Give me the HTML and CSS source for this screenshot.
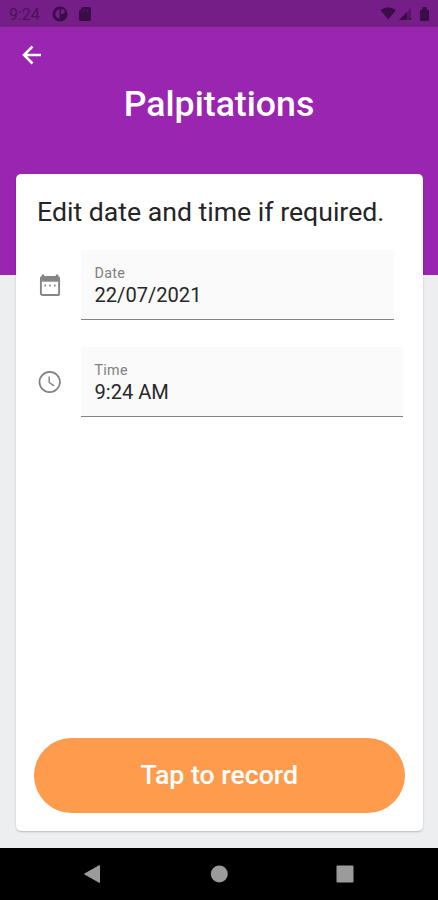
FILE: index.html
```html
<!DOCTYPE html>
<html lang="en">
<head>
<meta charset="utf-8">
<title>Palpitations</title>
<link rel="stylesheet" href="styles.css">
</head>
<body>
<div class="app">
  <div class="status">
    <span class="clock">9:24</span>
    <svg class="st-app" width="16" height="16" viewBox="0 0 16 16"><circle cx="8" cy="8" r="7.500" fill="#3a0d49"/><path d="M7.600 3v9.500C5.300 12.500 3.300 10.500 3.300 8S5 3.400 7.600 3zM9 3.200h1.400a2.400 2.400 0 0 1 0 4.800H9z" fill="#761e87"/></svg>
    <svg class="st-sd" width="12" height="14" viewBox="0 0 12 14"><path d="M4 0h6.500Q12 0 12 1.500v11q0 1.500-1.500 1.500h-9Q0 14 0 12.500V4z" fill="#3a0d49"/><path d="M4 2.500v2M6.200 2.500v2M8.400 2.500v2" stroke="#761e87" stroke-width=".6"/></svg>
    <svg class="st-right" width="50" height="16" viewBox="0 0 50 16"><path d="M.5 4Q8 -1.500 16 4L8.300 13.500z" fill="#3a0d49"/><path d="M19 14L31 2v12z" fill="#3a0d49" opacity=".5"/><path d="M19 14l8-8v8zM29 12h2v2h-2z" fill="#3a0d49"/><path d="M40 4.500L42.500 3V1h4v2L49 4.500V14q0 1-1 1h-7q-1 0-1-1z" fill="#3a0d49"/></svg>
  </div>
  <header class="header">
    <svg class="back" width="20" height="20" viewBox="0 0 20 20" fill="none" stroke="#fff" stroke-width="2.500"><path d="M19 10H2.500M10.500 1.500L2 10l8.500 8.500"/></svg>
    <h1>Palpitations</h1>
  </header>
  <main class="card">
    <h2>Edit date and time if required.</h2>
    <div class="row date">
      <svg class="icon" width="22" height="24" viewBox="0 0 22 24"><path d="M4 1.500v3M18 1.500v3" stroke="#858585" stroke-width="2.400"/><rect x="1.900" y="4" width="18.200" height="18" rx="1.600" fill="none" stroke="#858585" stroke-width="1.900"/><path d="M2 3.500h18v5.200H2z" fill="#858585"/><path d="M5.400 12.500h1.600M10.200 12.500h1.600M15 12.500h1.600" stroke="#858585" stroke-width="1.800"/></svg>
      <div class="field"><span class="label">Date</span><span class="value">22/07/2021</span></div>
    </div>
    <div class="row time">
      <svg class="icon" width="22" height="24" viewBox="0 0 22 24" fill="none" stroke="#808080"><circle cx="10.700" cy="12" r="10.200" stroke-width="1.700"/><path d="M10.200 6.500v6l4.800 3.400" stroke-width="1.400"/></svg>
      <div class="field"><span class="label">Time</span><span class="value">9:24 AM</span></div>
    </div>
    <button class="record" type="button">Tap to record</button>
  </main>
  <nav class="nav">
    <svg width="18" height="20" viewBox="0 0 18 20"><path d="M1.500 10L16.500 1.500v17z" fill="#9b9b9b" stroke="#9b9b9b" stroke-linejoin="round"/></svg>
    <svg width="18" height="18" viewBox="0 0 18 18"><circle cx="9.300" cy="9" r="8.500" fill="#9b9b9b"/></svg>
    <svg width="18" height="18" viewBox="0 0 18 18"><rect x=".5" y=".5" width="17" height="17" rx="1" fill="#9b9b9b"/></svg>
  </nav>
</div>
</body>
</html>
```
FILE: styles.css
```css
* { box-sizing: border-box; }
body { margin: 0; font-family: Roboto, "Liberation Sans", sans-serif; }
.app {
  height: 900px;
  display: flex;
  flex-direction: column;
  background: #eceef0;
}
.status {
  height: 27px;
  flex: none;
  display: flex;
  align-items: center;
  padding: 1px 8px 0 9px;
  background: #761e87;
  color: #4a145a;
}
.clock { width: 43px; font-size: 16px; }
.st-sd { margin-left: 11px; }
.st-right { margin-left: auto; }
.header {
  height: 247.500px;
  flex: none;
  padding-top: .1px;
  background: #9a25b1;
  color: #fff;
}
.back { display: block; margin: 18px 0 0 22px; }
h1 {
  margin: 18px 0 0;
  font-size: 35.700px;
  line-height: 42px;
  font-weight: 500;
  text-align: center;
}
.card {
  height: 657px;
  flex: none;
  margin: -100.500px 15.500px 0 16px;
  padding: 20px 18px 18px;
  display: flex;
  flex-direction: column;
  background: #fff;
  border-radius: 5px;
  box-shadow: 0 1px 2px rgba(0, 0, 0, .22);
}
h2 {
  margin: 0 0 20px 3px;
  font-size: 26.650px;
  line-height: 36px;
  font-weight: 400;
  white-space: nowrap;
  color: #252525;
}
.row { display: flex; align-items: center; gap: 20px; padding-left: 5px; }
.icon { flex: none; overflow: visible; }
.date { margin-right: 10.500px; }
.time { margin: 27px 1.500px 0 0; }
.field {
  flex: 1;
  height: 70px;
  display: flex;
  flex-direction: column;
  padding: 14px 14px 0 13.500px;
  background: #fafafa;
  border-bottom: 1px solid #858585;
}
.label { font-size: 14.300px; line-height: 18px; letter-spacing: .3px; color: #808080; }
.value { font-size: 20.100px; line-height: 26px; color: #282828; }
.record {
  height: 75.500px;
  margin-top: auto;
  padding-top: 1px;
  border: 0;
  border-radius: 38px;
  background: #ff9b4d;
  color: #fff;
  font: 500 26.700px Roboto, "Liberation Sans", sans-serif;
}
.nav {
  height: 52.500px;
  flex: none;
  margin-top: auto;
  display: flex;
  align-items: center;
  justify-content: space-between;
  padding: 0 84px 0 83px;
  background: #000;
}
```
